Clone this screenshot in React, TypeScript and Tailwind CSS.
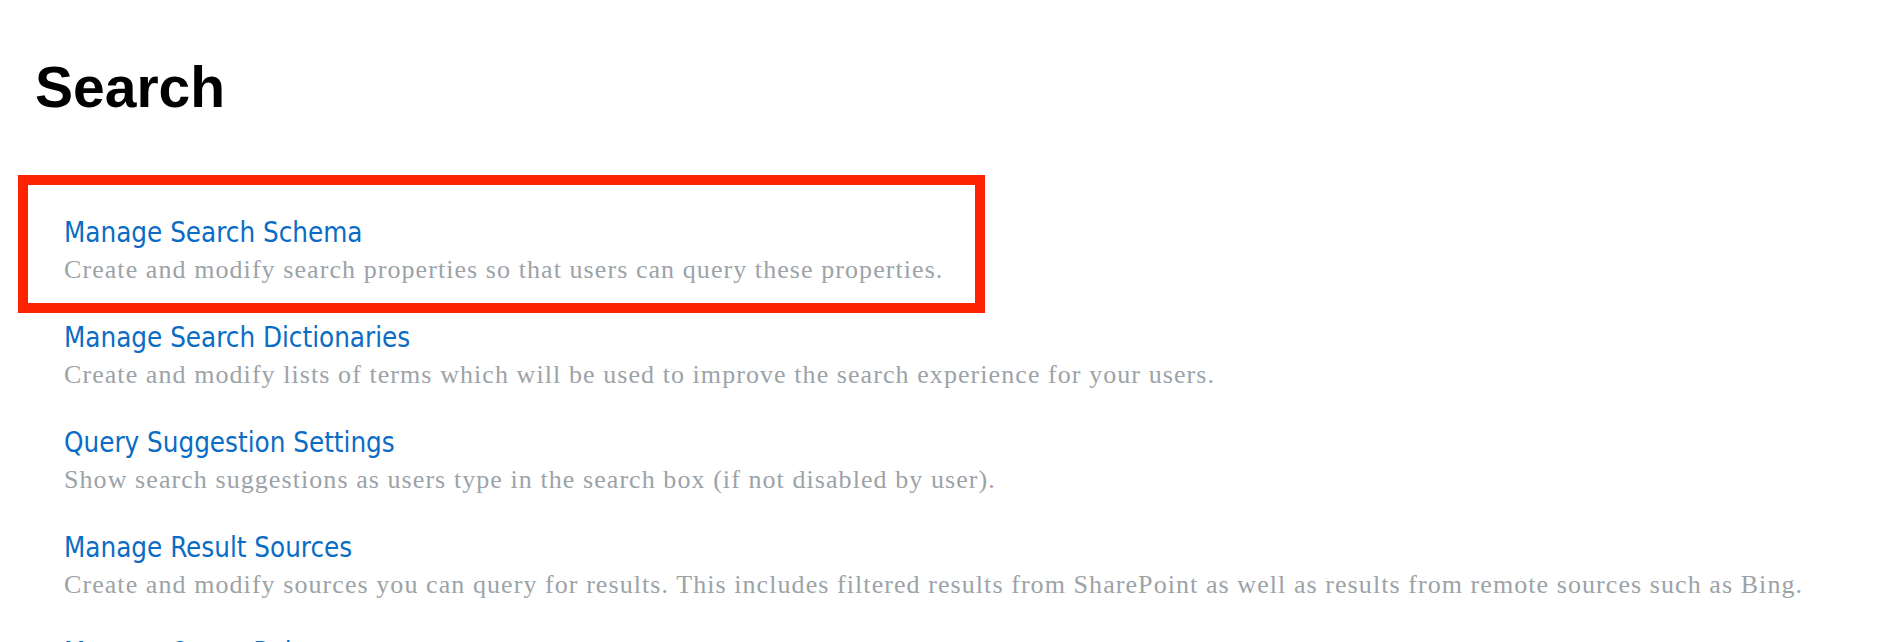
const items = [
  {
    title: "Manage Search Dictionaries",
    desc: "Create and modify lists of terms which will be used to improve the search experience for your users.",
  },
  {
    title: "Query Suggestion Settings",
    desc: "Show search suggestions as users type in the search box (if not disabled by user).",
  },
  {
    title: "Manage Result Sources",
    desc: "Create and modify sources you can query for results. This includes filtered results from SharePoint as well as results from remote sources such as Bing.",
  },
  {
    title: "Manage Query Rules",
    desc: "Define which query rules apply to searches and in which order they are evaluated.",
  },
];

function Entry({ title, desc }: { title: string; desc: string }) {
  return (
    <div>
      <a
        href="#"
        className="block text-[27.5px] leading-[36px] text-[#0a6cc4] whitespace-nowrap"
        style={{ fontFamily: '"DejaVu Sans Condensed", "DejaVu Sans", sans-serif', fontStretch: "condensed" }}
      >
        {title}
      </a>
      <p className="mt-[2px] font-['Liberation_Serif',serif] text-[26px] leading-[36px] tracking-[1.07px] text-[#9ca3a8] whitespace-nowrap">
        {desc}
      </p>
    </div>
  );
}

export default function App() {
  return (
    <div className="h-[642px] overflow-hidden bg-white pl-[18px] pt-[59px]">
      <h1 className="ml-[17px] font-['Liberation_Sans',Arial,sans-serif] text-[57px] font-bold leading-[56px] text-black">
        Search
      </h1>

      <div className="mt-[60px] w-[967px] border-[10px] border-[#fd2300] pl-[36px] pt-[29px] pb-[15px]">
        <Entry
          title="Manage Search Schema"
          desc="Create and modify search properties so that users can query these properties."
        />
      </div>

      <div className="mt-[6px] ml-[46px] flex flex-col gap-[31px]">
        {items.map((it) => (
          <Entry key={it.title} title={it.title} desc={it.desc} />
        ))}
      </div>
    </div>
  );
}
